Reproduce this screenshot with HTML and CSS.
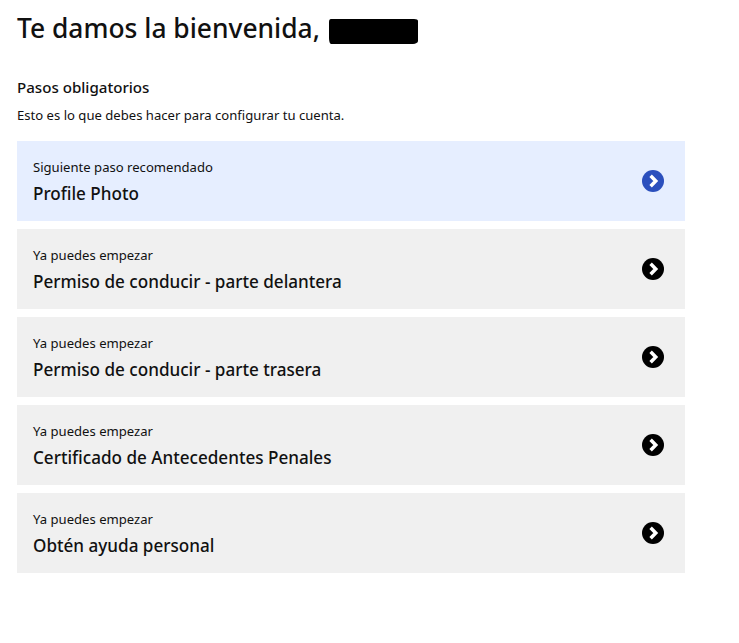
FILE: index.html
```html
<!DOCTYPE html>
<html lang="es">
<head>
    <meta charset="UTF-8">
    <meta name="viewport" content="width=device-width, initial-scale=1.0">
    <title>Pasos obligatorios</title>
    <link rel="stylesheet" href="styles.css">
</head>
<body>
    <h1 class="welcome">Te damos la bienvenida, <span class="redacted"></span></h1>
    <h2 class="section-title">Pasos obligatorios</h2>
    <p class="section-text">Esto es lo que debes hacer para configurar tu cuenta.</p>

    <ul class="steps">
        <li class="step step-next">
            <div>
                <div class="step-status">Siguiente paso recomendado</div>
                <div class="step-name">Profile Photo</div>
            </div>
            <svg class="step-icon" viewBox="0 0 24 24"><circle cx="12" cy="12" r="12" fill="#2b4fbd"/><path d="M9.4 6.3 15 12 9.4 17.7" fill="none" stroke="#fff" stroke-width="3.8"/></svg>
        </li>
        <li class="step">
            <div>
                <div class="step-status">Ya puedes empezar</div>
                <div class="step-name">Permiso de conducir - parte delantera</div>
            </div>
            <svg class="step-icon" viewBox="0 0 24 24"><circle cx="12" cy="12" r="12" fill="#000"/><path d="M9.4 6.3 15 12 9.4 17.7" fill="none" stroke="#fff" stroke-width="3.8"/></svg>
        </li>
        <li class="step">
            <div>
                <div class="step-status">Ya puedes empezar</div>
                <div class="step-name">Permiso de conducir - parte trasera</div>
            </div>
            <svg class="step-icon" viewBox="0 0 24 24"><circle cx="12" cy="12" r="12" fill="#000"/><path d="M9.4 6.3 15 12 9.4 17.7" fill="none" stroke="#fff" stroke-width="3.8"/></svg>
        </li>
        <li class="step">
            <div>
                <div class="step-status">Ya puedes empezar</div>
                <div class="step-name">Certificado de Antecedentes Penales</div>
            </div>
            <svg class="step-icon" viewBox="0 0 24 24"><circle cx="12" cy="12" r="12" fill="#000"/><path d="M9.4 6.3 15 12 9.4 17.7" fill="none" stroke="#fff" stroke-width="3.8"/></svg>
        </li>
        <li class="step">
            <div>
                <div class="step-status">Ya puedes empezar</div>
                <div class="step-name">Obtén ayuda personal</div>
            </div>
            <svg class="step-icon" viewBox="0 0 24 24"><circle cx="12" cy="12" r="12" fill="#000"/><path d="M9.4 6.3 15 12 9.4 17.7" fill="none" stroke="#fff" stroke-width="3.8"/></svg>
        </li>
    </ul>
</body>
</html>
```

FILE: styles.css
```css
body {
    font-family: "Noto Sans", "Open Sans", sans-serif;
    margin: 0;
    padding: 9px 54px 0 17px;
    background-color: #fff;
    color: #111;
}
.welcome {
    margin: 0;
    font-size: 26.4px;
    line-height: 38px;
    font-weight: 500;
}
.redacted {
    display: inline-block;
    width: 89px;
    height: 25px;
    margin-left: 2px;
    vertical-align: -6px;
    background-color: #000;
    border-radius: 2px 4px 5px 2px / 3px 2px 3px 6px;
}
.section-title {
    margin: 30px 0 0;
    font-size: 15.1px;
    line-height: 20px;
    font-weight: 500;
}
.section-text {
    margin: 8px 0 0;
    font-size: 13.1px;
    line-height: 20px;
}
.steps {
    list-style: none;
    margin: 16px 0 0;
    padding: 0;
    display: flex;
    flex-direction: column;
    gap: 8px;
}
.step {
    display: flex;
    align-items: center;
    justify-content: space-between;
    height: 80px;
    box-sizing: border-box;
    padding: 0 21px 0 16px;
    background-color: #f0f0f0;
}
.step-next {
    background-color: #e6eeff;
}
.step-status {
    font-size: 13.1px;
    line-height: 20px;
}
.step-name {
    margin: 5px 0 -1px;
    font-size: 17.1px;
    line-height: 24px;
    font-weight: 500;
}
.step-icon {
    width: 22px;
    height: 22px;
}
```
